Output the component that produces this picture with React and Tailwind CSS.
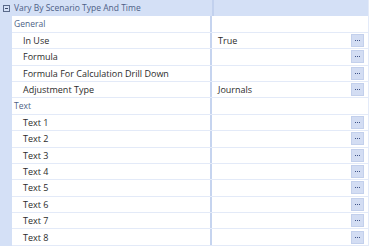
import React from "react";

const Btn = () => (
  <div className="w-[13px] h-[13px] bg-[#d3ddf3] border border-[#c3d0ec] flex items-center justify-center gap-px">
    <div className="w-px h-px bg-[#3f5387]" />
    <div className="w-px h-px bg-[#3f5387]" />
    <div className="w-px h-px bg-[#3f5387]" />
  </div>
);

const Row = ({ name, value, btn = true, category = false }) => (
  <div className="flex h-[16.4px] border-b border-[#e3eaf8]">
    <div
      className={
        "w-[198px] shrink-0 flex items-center truncate " +
        (category ? "pl-[2px] text-[#4d5f86] text-[8.5px]" : "pl-[11px] text-[#2b2b2b]")
      }
    >
      {name}
    </div>
    <div className="w-[2px] shrink-0 bg-[#c6d4ef]" />
    <div className="flex-1 flex items-center pl-[6px] text-[#2b2b2b]">{value}</div>
    <div className="w-[17px] shrink-0 flex items-center">{btn && !category ? <Btn /> : null}</div>
  </div>
);

export default function App() {
  const texts = ["Text 1", "Text 2", "Text 3", "Text 4", "Text 5", "Text 6", "Text 7", "Text 8"];
  return (
    <div
      className="w-[371px] h-[246px] bg-white overflow-hidden text-[9px] leading-none"
      style={{ fontFamily: '"Open Sans", "Noto Sans", sans-serif' }}
    >
      <div className="w-[369px] h-full flex flex-col border-r border-[#e3eaf8]">
        <div className="flex h-[16.4px] bg-[#d4e0f6] shrink-0">
          <div className="w-[12px] shrink-0 flex items-center justify-center">
            <div className="w-[7px] h-[7px] border border-[#5a6a8a] flex items-center justify-center">
              <div className="w-[3px] h-px bg-[#3b4a6b]" />
            </div>
          </div>
          <div className="w-[200px] shrink-0 flex items-center pl-[2px] text-[#4d5f86] text-[8.5px]">
            Vary By Scenario Type And Time
          </div>
          <div className="w-[2px] shrink-0 bg-[#c2d1ee]" />
          <div className="flex-1" />
        </div>
        <div className="flex flex-1">
          <div className="w-[12px] shrink-0 bg-[#d4e0f6]" />
          <div className="flex-1 flex flex-col">
            <Row name="General" category />
            <Row name="In Use" value="True" />
            <Row name="Formula" />
            <Row name="Formula For Calculation Drill Down" />
            <Row name="Adjustment Type" value="Journals" />
            <Row name="Text" category />
            {texts.map((t) => (
              <Row key={t} name={t} />
            ))}
          </div>
        </div>
      </div>
    </div>
  );
}
